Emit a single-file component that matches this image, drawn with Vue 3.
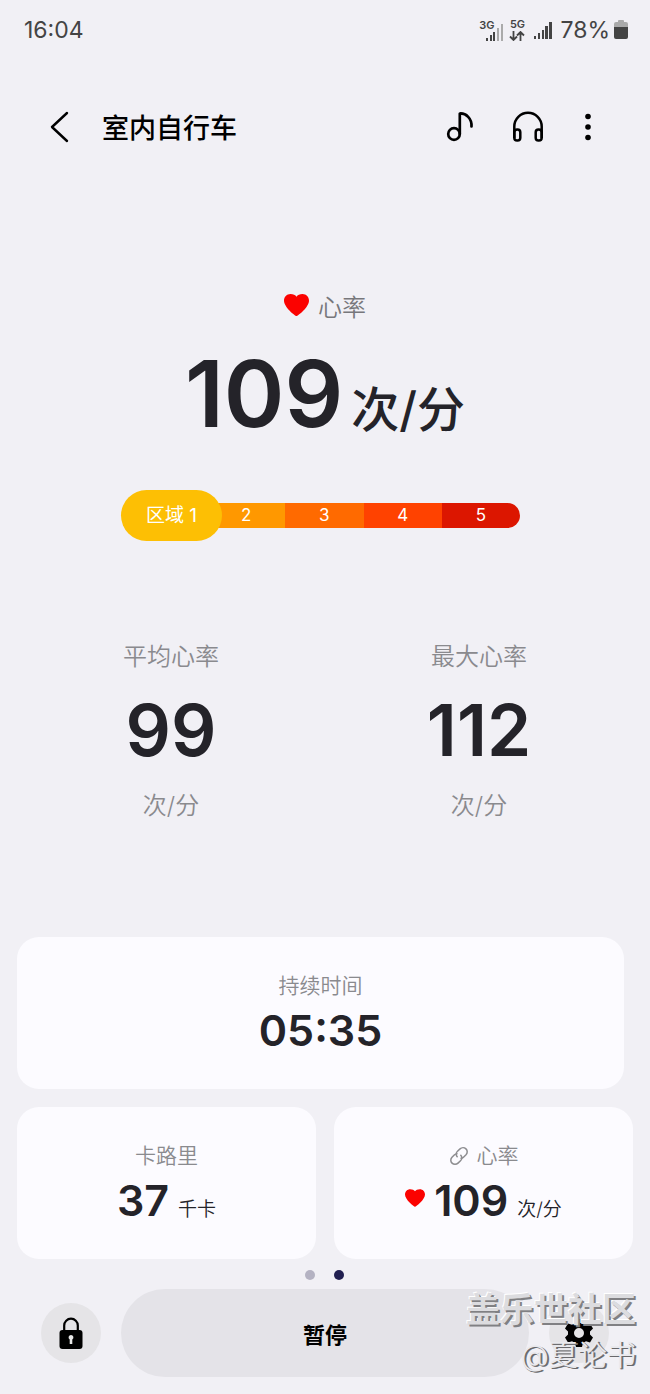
<script setup>
import { ref } from 'vue'

const pulso = ref(109)
const zonaActual = ref(1)
const paginaActiva = ref(1)

const zonas = [
  { id: 2, clase: 'zone-2' },
  { id: 3, clase: 'zone-3' },
  { id: 4, clase: 'zone-4' },
  { id: 5, clase: 'zone-5' }
]

const resumen = [
  { titulo: '平均心率', valor: 99 },
  { titulo: '最大心率', valor: 112 }
]
</script>

<template>
  <div class="workout-page">
    <div class="status-bar">
      <span class="clock">16:04</span>
      <div class="status-icons">
        <div class="sim">
          <span class="net">3G</span>
          <svg class="signal" width="18" height="18" viewBox="0 0 18 18">
            <path d="M1 15h2v3H1zM5 12h2v6H5zM8 9h2v9H8z" fill="#444" />
            <path d="M12 5h2v13h-2zM16 1h2v17h-2z" fill="#aaa" />
          </svg>
        </div>
        <div class="data">
          <span class="net">5G</span>
          <svg width="16" height="10" viewBox="0 0 16 10" fill="none" stroke="#444" stroke-width="1.800">
            <path d="M4.500 0v8.500M1 5.500l3.500 3.500L8 5.500M11.500 10V1.500M8 4.500L11.500 1 15 4.500" />
          </svg>
        </div>
        <svg class="signal-full" width="18" height="18" viewBox="0 0 18 18">
          <path d="M0 15h2v3H0zM4 12h2v6H4zM8 9h2v9H8zM11 5h3v13h-3zM15 1h3v17h-3z" fill="#444" />
        </svg>
        <span class="percent">78%</span>
        <svg width="14" height="20" viewBox="0 0 14 20">
          <path d="M4 1q0-1 1-1h4q1 0 1 1v1h2q2 0 2 2v4H0V4q0-2 2-2h2z" fill="#aaa" />
          <path d="M0 7h14v10q0 2-2 2H2q-2 0-2-2z" fill="#444" />
        </svg>
      </div>
    </div>

    <header class="top-bar">
      <button class="icon-btn back" aria-label="返回">
        <svg width="20" height="34" viewBox="0 0 20 34" fill="none" stroke="#000" stroke-width="2.400" stroke-linecap="round" stroke-linejoin="round">
          <path d="M17 3L2 17l15 14" />
        </svg>
      </button>
      <h1>室内自行车</h1>
      <button class="icon-btn" aria-label="音乐">
        <svg width="28" height="32" viewBox="0 0 28 32" fill="none" stroke="#000" stroke-width="2.700" stroke-linecap="round" stroke-linejoin="round">
          <circle cx="8" cy="23" r="5.800" />
          <path d="M13.800 23V2.500C20 2 26 7.500 25.500 15.500" />
        </svg>
      </button>
      <button class="icon-btn" aria-label="耳机">
        <svg width="32" height="32" viewBox="0 0 32 32" fill="none" stroke="#000" stroke-width="2.500" stroke-linejoin="round">
          <path d="M2.300 27V15.500a13.700 13.700 0 0 1 27.400 0V27" />
          <rect x="2.300" y="18.500" width="6" height="11" rx="2.800" />
          <rect x="23.700" y="18.500" width="6" height="11" rx="2.800" />
        </svg>
      </button>
      <button class="icon-btn more" aria-label="更多">
        <svg width="8" height="28" viewBox="0 0 8 28">
          <circle cx="4" cy="3.500" r="2.800" />
          <circle cx="4" cy="14" r="2.800" />
          <circle cx="4" cy="24.500" r="2.800" />
        </svg>
      </button>
    </header>

    <main>
      <section class="hero">
        <div class="hero-label">
          <svg width="25" height="22" viewBox="0 0 24 21">
            <path d="M12 21C10.800 21 0 12.500 0 6.300 0 2.700 2.800 0 6.200 0 8.800 0 11 1 12 2.500 13 1 15.200 0 17.800 0 21.200 0 24 2.700 24 6.300 24 12.500 13.200 21 12 21z" fill="#fb0200" />
          </svg>
          <span>心率</span>
        </div>
        <div class="hero-value">
          <strong>{{ pulso }}</strong>
          <span>次/分</span>
        </div>
      </section>

      <div class="zone-bar">
        <div class="zone-current">区域 {{ zonaActual }}</div>
        <div class="zone-track">
          <span v-for="zona in zonas" :key="zona.id" :class="zona.clase">{{ zona.id }}</span>
        </div>
      </div>

      <section class="summary">
        <div v-for="dato in resumen" :key="dato.titulo" class="summary-item">
          <p class="grey">{{ dato.titulo }}</p>
          <strong>{{ dato.valor }}</strong>
          <p class="grey">次/分</p>
        </div>
      </section>

      <section class="cards">
        <article class="card wide">
          <h2>持续时间</h2>
          <div class="card-value"><strong>05:35</strong></div>
        </article>
        <article class="card">
          <h2>卡路里</h2>
          <div class="card-value"><strong>37</strong><span>千卡</span></div>
        </article>
        <article class="card">
          <h2>
            <svg width="20" height="20" viewBox="0 0 20 20" fill="none" stroke="#8d8d90" stroke-width="1.500" stroke-linecap="round">
              <path d="M8.200 10.800a4 4 0 0 1 .3-5.600l2.500-2.300a4.200 4.200 0 0 1 6 5.900l-2.500 2.400a4.200 4.200 0 0 1-2.500 1.100" />
              <path d="M11.800 9.200a4 4 0 0 1-.3 5.600L9 17.100a4.200 4.200 0 0 1-6-5.900l2.500-2.400A4.200 4.200 0 0 1 8 7.700" />
            </svg>
            心率
          </h2>
          <div class="card-value">
            <svg class="small-heart" width="20" height="18" viewBox="0 0 24 21">
              <path d="M12 21C10.800 21 0 12.500 0 6.300 0 2.700 2.800 0 6.200 0 8.800 0 11 1 12 2.500 13 1 15.200 0 17.800 0 21.200 0 24 2.700 24 6.300 24 12.500 13.200 21 12 21z" fill="#fb0200" />
            </svg>
            <strong>{{ pulso }}</strong><span>次/分</span>
          </div>
        </article>
      </section>
    </main>

    <div class="dots">
      <i v-for="n in 2" :key="n" :class="{ active: n - 1 === paginaActiva }"></i>
    </div>

    <footer class="controls">
      <button class="round-btn" aria-label="锁定">
        <svg width="24" height="32" viewBox="0 0 24 32">
          <path d="M5.200 14V8.500a6.800 6.800 0 0 1 13.600 0V14" fill="none" stroke="#000" stroke-width="2.200" />
          <rect x="0.500" y="13" width="23" height="19" rx="3" />
          <path d="M12 18a2.500 2.500 0 0 1 1.300 4.600V27h-2.600v-4.400A2.500 2.500 0 0 1 12 18z" fill="#e8e8e8" />
        </svg>
      </button>
      <button class="pause-btn">暂停</button>
      <button class="round-btn" aria-label="设置">
        <svg width="28" height="28" viewBox="0 0 28 28">
          <path fill-rule="evenodd" d="M11 0h6l1 4 3 1.700 4-1.100 3 5-3 2.900v3l3 2.900-3 5-4-1.100-3 1.700-1 4h-6l-1-4-3-1.700-4 1.100-3-5 3-2.900v-3L0 9.600l3-5 4 1.100L10 4zM14 9a5 5 0 1 0 0 10 5 5 0 0 0 0-10z" />
        </svg>
      </button>
    </footer>

    <div class="watermark">
      <b>盖乐世社区</b>
      <span>@夏论书</span>
    </div>
  </div>
</template>

<style>
body { background: #f1f0f5; }
</style>

<style scoped>
.workout-page { position: relative; background: #f1f0f5; color: #242329; font-family: Inter, "Noto Sans CJK SC", sans-serif; padding-bottom: 17px; }
button { border: 0; padding: 0; background: none; font-family: inherit; cursor: pointer; }
h1, h2, p { margin: 0; }
svg { display: block; flex: none; }

.status-bar { display: flex; justify-content: space-between; align-items: center; height: 60px; padding: 0 22px 0 24px; color: #444; font-size: 23px; }
.status-icons { display: flex; align-items: center; }
.net { display: block; font-size: 11px; line-height: 11px; font-weight: 600; }
.sim { display: flex; align-items: flex-start; margin-right: 6px; }
.sim .signal { margin: 3px 0 0 -9px; }
.data { display: flex; flex-direction: column; align-items: center; gap: 1px; margin-right: 9px; }
.signal-full { margin-right: 8px; }
.percent { margin-right: 4px; }

.top-bar { display: flex; align-items: center; height: 64px; margin-top: 35px; padding: 0 58px 0 50px; }
.top-bar h1 { flex: 1; margin-left: 32px; padding-top: 3px; color: #000; font-size: 27px; line-height: 36px; font-weight: 500; }
.icon-btn { margin-left: 38px; }
.icon-btn.back { margin-left: 0; }
.icon-btn.more { margin-left: 40px; }

main { padding: 0 17px; }
.hero { margin-top: 133px; }
.hero-label { display: flex; justify-content: center; align-items: center; gap: 9px; font-size: 24px; line-height: 32px; font-weight: 350; color: #77777b; }
.hero-label svg { margin-bottom: 6px; }
.hero-value { display: flex; justify-content: center; align-items: baseline; gap: 8px; height: 104px; margin-top: 18px; line-height: 104px; }
.hero-value strong { font-size: 92px; font-weight: 600; }
.hero-value span { font-size: 48px; font-weight: 500; }

.zone-bar { display: flex; align-items: center; margin: 44px 113px 0 104px; color: #fff; }
.zone-current { z-index: 1; width: 101px; margin-right: -15px; border-radius: 26px; background: #fdbf04; text-align: center; font-size: 19px; line-height: 51px; }
.zone-track { display: flex; flex: 1; border-radius: 0 13px 13px 0; overflow: hidden; font-size: 17px; line-height: 25px; text-align: center; }
.zone-track span { flex: 1; }
.zone-2 { background: #ff9800; }
.zone-3 { background: #ff6a00; }
.zone-4 { background: #ff4200; }
.zone-5 { background: #dc1600; }

.summary { display: grid; grid-template-columns: 1fr 1fr; margin-top: 100px; text-align: center; }
.grey { color: #8a8a8e; font-size: 24px; line-height: 32px; font-weight: 350; }
.summary-item strong { display: block; margin: 17px 0 20px; font-size: 71px; line-height: 80px; font-weight: 600; }

.cards { display: grid; grid-template-columns: 1fr 1fr; gap: 18px; margin-top: 115px; }
.card { padding: 35px 0 31px; border-radius: 22px; background: #fcfbff; text-align: center; }
.card.wide { grid-column: span 2; margin-right: 9px; }
.card h2 { display: flex; justify-content: center; align-items: center; gap: 8px; color: #8a8a8e; font-size: 21px; line-height: 28px; font-weight: 350; }
.card-value { display: flex; justify-content: center; align-items: baseline; gap: 9px; height: 56px; margin-top: 2px; line-height: 56px; }
.card-value strong { font-size: 43px; font-weight: 600; }
.card-value span { font-size: 19px; font-weight: 350; }
.small-heart { align-self: center; margin-bottom: 4px; }

.dots { display: flex; justify-content: center; gap: 19px; margin: 11px 2px 0 0; }
.dots i { width: 10px; height: 10px; border-radius: 50%; background: #b4b2c2; }
.dots i.active { background: #211f50; }

.controls { display: flex; align-items: center; gap: 20px; margin-top: 9px; padding: 0 41px; }
.round-btn { display: flex; justify-content: center; align-items: center; width: 60px; height: 60px; border-radius: 50%; background: #e5e4e7; }
.pause-btn { flex: 1; height: 88px; border-radius: 44px; background: #e4e3e8; color: #000; font-size: 22px; font-weight: 700; }

.watermark { position: absolute; right: 14px; bottom: 15px; display: flex; flex-direction: column; align-items: flex-end; color: #dcdcdf; pointer-events: none; }
.watermark b { font-size: 34px; line-height: 46px; text-shadow: 2px 2px 0 #808083, -1px -1px 0 #fff; }
.watermark span { font-size: 29px; line-height: 46px; font-weight: 350; color: #e9e9ed; text-shadow: 1px 1px 0 #68686b, 2px 1px 0 #77777a; }
</style>
